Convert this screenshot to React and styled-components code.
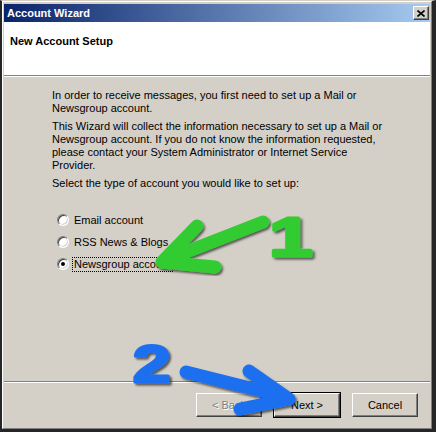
import React from 'react';
import styled, { createGlobalStyle } from 'styled-components';

const Global = createGlobalStyle`
  html, body { margin: 0; padding: 0; background: #d4d0c8; }
  body { font-family: "Liberation Sans", Arial, sans-serif; font-size: 11px; }
`

const Stage = styled.div`
  position: relative;
  width: 436px;
  height: 432px;
`

const Window = styled.div`
  width: 436px;
  height: 432px;
  box-sizing: border-box;
  display: flex;
  flex-direction: column;
  background: #d4d0c8;
  border-top: 1px solid #d4d0c8;
  border-left: 2px solid #262626;
  border-right: 4px solid #262626;
  border-bottom: 3px solid #262626;
`

const Frame = styled.div`
  flex: 1;
  min-height: 0;
  display: flex;
  flex-direction: column;
  border-top: 1px solid #fff;
  border-left: 1px solid #fff;
  border-right: 1px solid #808080;
  border-bottom: 1px solid #808080;
  padding: 2px 1px 0 1px;
`

const TitleBar = styled.div`
  height: 18px;
  flex: none;
  display: flex;
  align-items: center;
  justify-content: space-between;
  padding: 0 1px 0 3px;
  background: linear-gradient(to right, #0a246a, #a6caf0);
  color: #fff;
  font-weight: bold;
  font-size: 11px;
`

const CloseButton = styled.div`
  width: 16px;
  height: 14px;
  box-sizing: border-box;
  display: flex;
  align-items: center;
  justify-content: center;
  background: #d4d0c8;
  border: 1px solid;
  border-color: #fff #404040 #404040 #fff;
  box-shadow: inset -1px -1px #808080;
`

const Header = styled.div`
  height: 53px;
  flex: none;
  box-sizing: border-box;
  padding: 13px 6px 0;
  background: #fff;
  color: #000;
  font-weight: bold;
  line-height: 13px;
`

const Separator = styled.div`
  height: 2px;
  flex: none;
  box-sizing: border-box;
  border-top: 1px solid #808080;
  border-bottom: 1px solid #fff;
`

const Body = styled.div`
  flex: 1;
  padding: 12px 0 0 48px;
  color: #000;
`

const Para = styled.p`
  margin: 0 0 5px;
  line-height: 13px;
  white-space: nowrap;
`

const RadioGroup = styled.div`
  margin-top: 19px;
  padding-left: 5px;
  display: flex;
  flex-direction: column;
`

const RadioRow = styled.div`
  height: 22px;
  display: flex;
  align-items: center;
  gap: 3px;
`

const Radio = styled.span`
  width: 12px;
  height: 12px;
  box-sizing: border-box;
  border-radius: 50%;
  border: 1px solid;
  border-color: #808080 #fff #fff #808080;
  box-shadow: inset 1px 1px #404040, inset -1px -1px #d4d0c8;
  background: #fff;
  display: flex;
  align-items: center;
  justify-content: center;

  &::after {
    content: '';
    width: 4px;
    height: 4px;
    border-radius: 50%;
    background: ${p => (p.$checked ? '#000' : 'transparent')};
  }
`

const RadioLabel = styled.span`
  line-height: 13px;
  padding: 0 1px;
  border: 1px dotted ${p => (p.$focus ? '#000' : 'transparent')};
`

const ButtonRow = styled.div`
  flex: none;
  display: flex;
  justify-content: flex-end;
  gap: 12px;
  padding: 10px 12px 11px;
`

const Button = styled.div`
  width: 66px;
  height: 24px;
  box-sizing: border-box;
  display: flex;
  align-items: center;
  justify-content: center;
  background: #d4d0c8;
  border: 1px solid;
  border-color: #fff #404040 #404040 #fff;
  box-shadow: inset -1px -1px #808080;
  color: ${p => (p.$disabled ? '#808080' : '#000')};
  text-shadow: ${p => (p.$disabled ? '1px 1px #fff' : 'none')};
  outline: ${p => (p.$default ? '1px solid #000' : 'none')};
`

const Annotations = styled.svg`
  position: absolute;
  left: 0;
  top: 0;
  width: 436px;
  height: 432px;
  pointer-events: none;
`

function Arrows() {
  return (
    <Annotations viewBox="0 0 436 432">
      <defs>
        <filter id="shade" x="-20%" y="-20%" width="140%" height="140%">
          <feDropShadow dx="1.5" dy="2" stdDeviation="1" floodColor="#000" floodOpacity="0.6" />
        </filter>
      </defs>
      <g filter="url(#shade)" fill="none" stroke="#33cc33" strokeWidth="13" strokeLinecap="round" strokeLinejoin="round">
        <path d="M263 222 L168 259" />
        <path d="M197 226 L162 262 L215 267" />
      </g>
      <g filter="url(#shade)" transform="translate(269 256) scale(1.4 1)">
        <text x="0" y="0" fontFamily="Liberation Sans, Arial, sans-serif" fontWeight="bold" fontSize="56" fill="#33cc33" stroke="#33cc33" strokeWidth="3" strokeLinejoin="round">1</text>
      </g>
      <g filter="url(#shade)" fill="none" stroke="#1c6ff0" strokeWidth="13" strokeLinecap="round" strokeLinejoin="round">
        <path d="M186 372 L282 396" />
        <path d="M249 371 L289 399 L240 409" />
      </g>
      <g filter="url(#shade)" transform="translate(133 382) scale(1.3 1)">
        <text x="0" y="0" fontFamily="Liberation Sans, Arial, sans-serif" fontWeight="bold" fontSize="52" fill="#1c6ff0" stroke="#1c6ff0" strokeWidth="3" strokeLinejoin="round">2</text>
      </g>
    </Annotations>
  )
}

export default function App() {
  return (
    <>
      <Global />
      <Stage>
        <Window>
          <Frame>
            <TitleBar>
              <span>Account Wizard</span>
              <CloseButton>
                <svg width="8" height="7" viewBox="0 0 8 7">
                  <path d="M0.5 0.5 L7.5 6.5 M7.5 0.5 L0.5 6.5" stroke="#000" strokeWidth="1.6" />
                </svg>
              </CloseButton>
            </TitleBar>
            <Header>New Account Setup</Header>
            <Separator />
            <Body>
              <Para>
                In order to receive messages, you first need to set up a Mail or<br />
                Newsgroup account.
              </Para>
              <Para>
                This Wizard will collect the information necessary to set up a Mail or<br />
                Newsgroup account. If you do not know the information requested,<br />
                please contact your System Administrator or Internet Service<br />
                Provider.
              </Para>
              <Para>Select the type of account you would like to set up:</Para>
              <RadioGroup>
                <RadioRow>
                  <Radio />
                  <RadioLabel>Email account</RadioLabel>
                </RadioRow>
                <RadioRow>
                  <Radio />
                  <RadioLabel>RSS News &amp; Blogs</RadioLabel>
                </RadioRow>
                <RadioRow>
                  <Radio $checked />
                  <RadioLabel $focus>Newsgroup account</RadioLabel>
                </RadioRow>
              </RadioGroup>
            </Body>
            <Separator />
            <ButtonRow>
              <Button $disabled>&lt; Back</Button>
              <Button $default>Next &gt;</Button>
              <Button>Cancel</Button>
            </ButtonRow>
          </Frame>
        </Window>
        <Arrows />
      </Stage>
    </>
  )
}
